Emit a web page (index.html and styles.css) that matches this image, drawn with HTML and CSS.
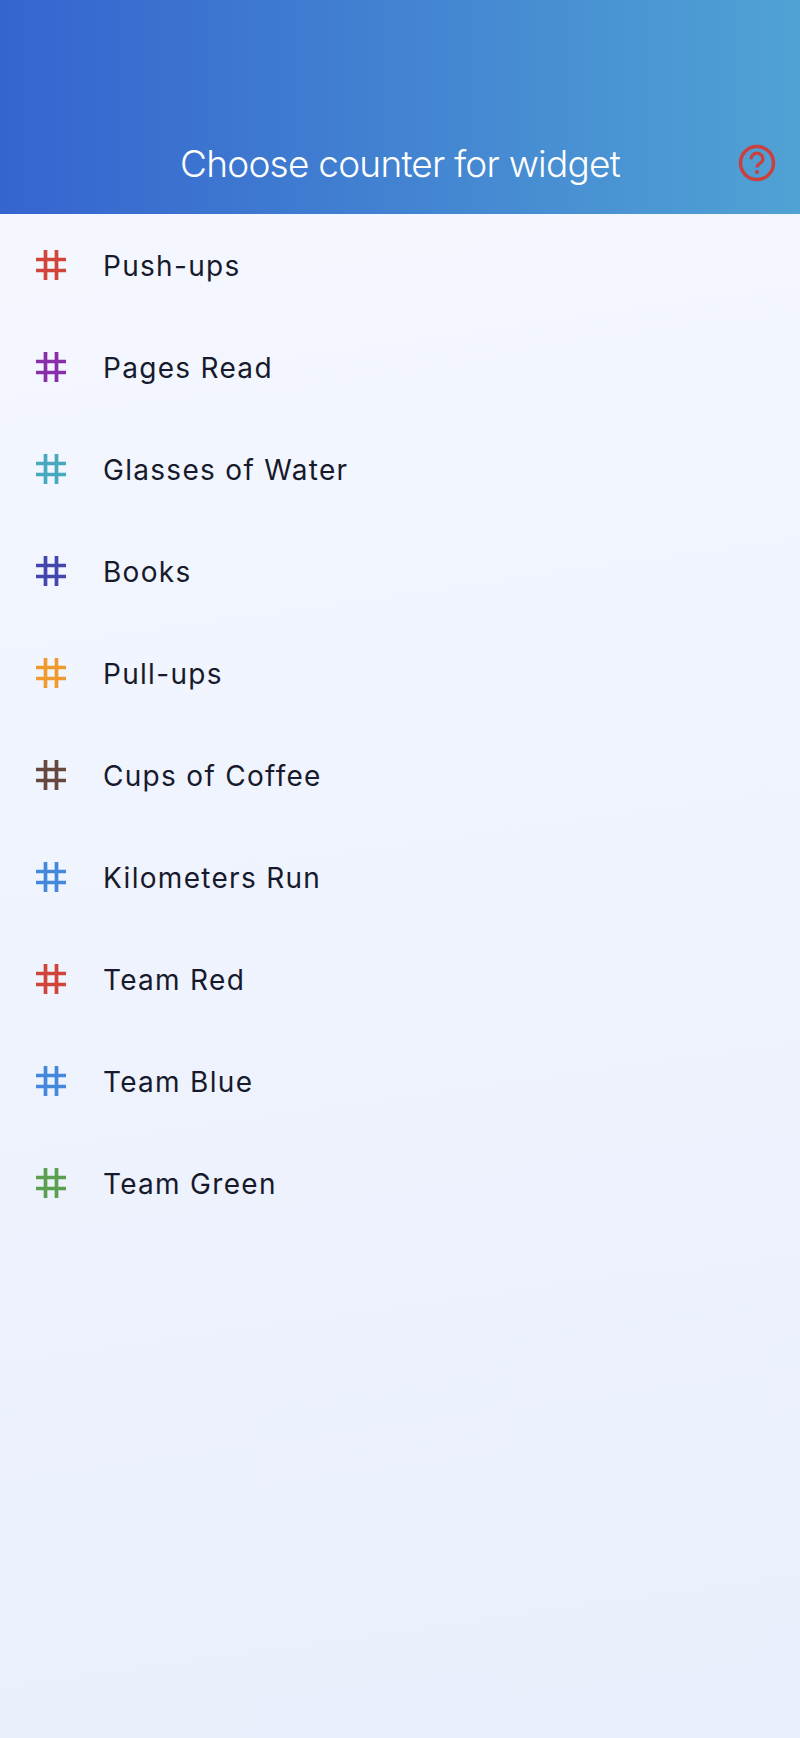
FILE: index.html
```html
<!DOCTYPE html>
<html>
<head>
  <link rel="stylesheet" href="styles.css">
</head>
<body>
  <svg class="defs" width="0" height="0">
    <symbol id="hash" viewBox="0 0 30 30">
      <path d="M9.500 0V30M20.500 0V30M0 9.500H30M0 20.500H30" fill="none" stroke="currentColor" stroke-width="3.700"/>
    </symbol>
  </svg>

  <div class="header">
    <h1>Choose counter for widget</h1>
    <svg class="help-icon" viewBox="0 0 38 38">
      <circle cx="19" cy="19" r="16.500" fill="none" stroke="#c9403f" stroke-width="3.500"/>
      <path d="M13 15.200a6 6 0 0 1 12 0c0 4-6 4.200-6 8.300" fill="none" stroke="#c9403f" stroke-width="3.200"/>
      <circle cx="19" cy="28" r="2.100" fill="#c9403f"/>
    </svg>
  </div>

  <div class="counter-list">
    <div class="counter-row">
      <svg class="hash red"><use href="#hash"/></svg>
      <span>Push-ups</span>
    </div>
    <div class="counter-row">
      <svg class="hash purple"><use href="#hash"/></svg>
      <span>Pages Read</span>
    </div>
    <div class="counter-row">
      <svg class="hash teal"><use href="#hash"/></svg>
      <span>Glasses of Water</span>
    </div>
    <div class="counter-row">
      <svg class="hash indigo"><use href="#hash"/></svg>
      <span>Books</span>
    </div>
    <div class="counter-row">
      <svg class="hash orange"><use href="#hash"/></svg>
      <span>Pull-ups</span>
    </div>
    <div class="counter-row">
      <svg class="hash brown"><use href="#hash"/></svg>
      <span>Cups of Coffee</span>
    </div>
    <div class="counter-row">
      <svg class="hash blue"><use href="#hash"/></svg>
      <span>Kilometers Run</span>
    </div>
    <div class="counter-row">
      <svg class="hash red"><use href="#hash"/></svg>
      <span>Team Red</span>
    </div>
    <div class="counter-row">
      <svg class="hash blue"><use href="#hash"/></svg>
      <span>Team Blue</span>
    </div>
    <div class="counter-row">
      <svg class="hash green"><use href="#hash"/></svg>
      <span>Team Green</span>
    </div>
  </div>
</body>
</html>
```

FILE: styles.css
```css
html, body {
  height: 100%;
}
body {
  margin: 0;
  font-family: Inter, "Liberation Sans", sans-serif;
  background: linear-gradient(172deg, #f6f8ff 0%, #edf2fd 65%, #e9effc 100%);
  color: #171a2c;
}
.defs {
  display: block;
  height: 0;
}
.header {
  height: 214px;
  display: flex;
  align-items: flex-end;
  justify-content: center;
  position: relative;
  background: linear-gradient(90deg, #3564cf 0%, #50a2d4 100%);
}
.header h1 {
  margin: 0 0 28px 0;
  font-size: 37px;
  font-weight: 300;
  letter-spacing: -0.76px;
  line-height: 44px;
  color: #fff;
}
.help-icon {
  position: absolute;
  right: 24px;
  bottom: 32px;
  width: 38px;
  height: 38px;
}
.counter-row {
  height: 102px;
  display: flex;
  align-items: center;
  padding-left: 36px;
  font-size: 28px;
  letter-spacing: 1.3px;
}
.counter-row span {
  padding-top: 1px;
}
.hash {
  width: 30px;
  height: 30px;
  margin-right: 37px;
  flex-shrink: 0;
}
.red { color: #d0443a; }
.purple { color: #8a2da8; }
.teal { color: #46a9bd; }
.indigo { color: #4346ad; }
.orange { color: #ef9a2e; }
.brown { color: #66483e; }
.blue { color: #4488dc; }
.green { color: #5ba04f; }
```
